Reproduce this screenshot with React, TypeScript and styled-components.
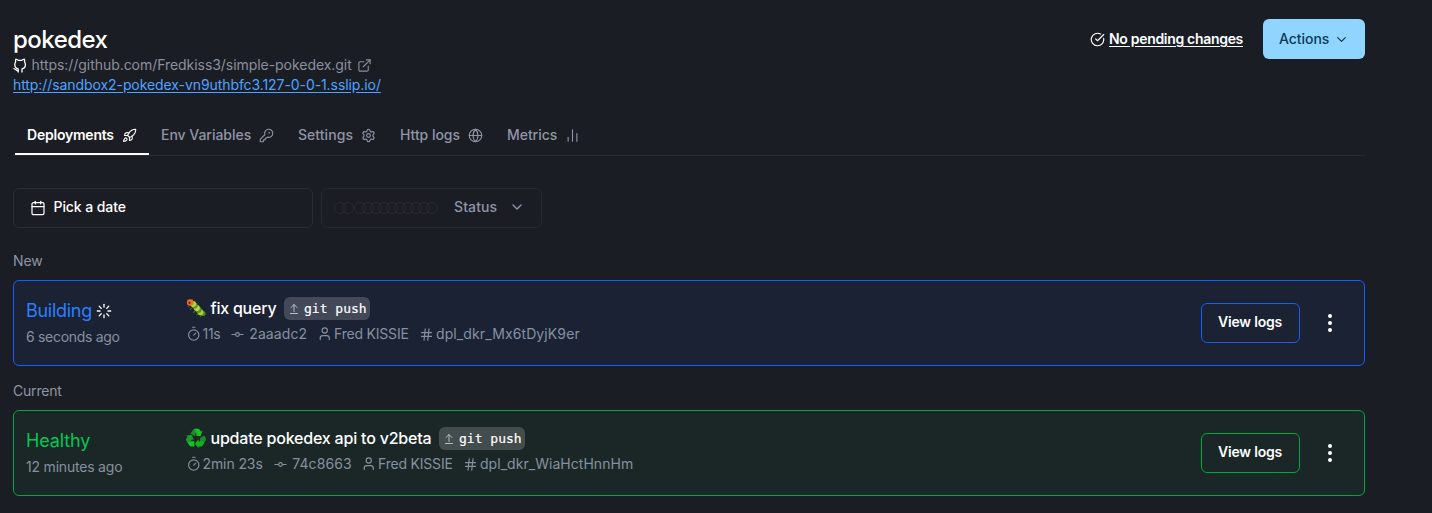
import React from "react";
import styled, { createGlobalStyle } from "styled-components";
import {
  ArrowUpFromLine,
  Calendar,
  ChartNoAxesColumn,
  ChevronDown,
  CircleCheckBig,
  EllipsisVertical,
  ExternalLink,
  GitCommitHorizontal,
  Globe,
  Hash,
  KeyRound,
  Loader,
  Rocket,
  Settings,
  Timer,
  User,
} from "lucide-react";

const Global = createGlobalStyle`
  * { box-sizing: border-box; }
  body {
    margin: 0;
    background: #1a1d24;
    color: #fff;
    font-family: Inter, "Liberation Sans", sans-serif;
    font-size: 14px;
    line-height: 20px;
    overflow: hidden;
  }
  svg { flex: none; display: block; }
`;

const Page = styled.main`
  width: 1365px;
  height: 513px;
  padding: 19px 0 0 13px;
`;

const Header = styled.header`
  display: flex;
  justify-content: space-between;
  height: 96px;
`;

/* A run of text that occupies a known width, with its tracking. */
const Text = styled.span<{ $w: number; $ls?: number }>`
  display: block;
  flex: none;
  width: ${(p) => p.$w}px;
  letter-spacing: ${(p) => p.$ls ?? 0}px;
  white-space: nowrap;
`;

const Title = styled.h1`
  margin: 0;
  padding-top: 5px;
  height: 36px;
  font-size: 24px;
  line-height: 32px;
  font-weight: 500;
  letter-spacing: -0.52px;
`;

const RepoRow = styled.div`
  display: flex;
  align-items: center;
  height: 20px;
  color: #8b8f9c;
  gap: 4.500px;
  & > svg:first-child { color: #fff; }
`;

const SiteLink = styled.a`
  display: block;
  color: #51a2ff;
  text-decoration: underline;
  text-underline-offset: 2px;
`;

const HeaderSide = styled.div`
  display: flex;
  align-items: center;
  height: 40px;
`;

const Pending = styled.div`
  display: flex;
  align-items: center;
  gap: 4px;
  margin-right: 20px;
  font-weight: 600;
  ${Text} { text-decoration: underline; text-underline-offset: 2px; }
`;

const ActionsButton = styled.button`
  display: flex;
  align-items: center;
  gap: 4px;
  width: 102px;
  height: 40px;
  padding: 0 0 0 16px;
  border: 0;
  border-radius: 6px;
  background: #90d5ff;
  color: #0b3a57;
  font: 500 14px/20px Inter, sans-serif;
  text-align: left;
`;

const Tabs = styled.nav`
  display: flex;
  height: 41px;
  padding-left: 2px;
  border-bottom: 1px solid #26292e;
`;

const Tab = styled.div<{ $active?: boolean; $w: number }>`
  display: flex;
  gap: 8px;
  width: ${(p) => p.$w}px;
  height: 40px;
  padding: 10px 0 0 12px;
  color: ${(p) => (p.$active ? "#fff" : "#9294a6")};
  font-weight: ${(p) => (p.$active ? 600 : 500)};
  border-bottom: 2px solid ${(p) => (p.$active ? "#fff" : "transparent")};
  svg { margin-top: 3px; }
`;

const Filters = styled.div`
  display: flex;
  gap: 8px;
  margin-top: 32px;
`;

const FilterBox = styled.div<{ $w: number; $dim?: boolean }>`
  display: flex;
  align-items: center;
  width: ${(p) => p.$w}px;
  height: 40px;
  padding: 0 12px 2px ${(p) => (p.$dim ? 12 : 16)}px;
  border: 1px solid ${(p) => (p.$dim ? "#25282d" : "#2b2d31")};
  border-radius: 6px;
  font-weight: 500;
  color: ${(p) => (p.$dim ? "#9294a6" : "#fff")};
`;

const DateIcon = styled(Calendar)`
  position: relative;
  top: 1px;
  margin-right: 7.500px;
`;

const Dots = styled.div`
  display: flex;
  width: 120px;
  padding-top: 2px;
`;

const Dot = styled.i<{ $gap?: boolean }>`
  width: 12px;
  height: 12px;
  border: 1px solid #2a2b2e;
  border-radius: 50%;
  margin-right: ${(p) => (p.$gap ? 0 : -4)}px;
`;

const SectionLabel = styled.div<{ $top: number }>`
  margin-top: ${(p) => p.$top}px;
  height: 29px;
  color: #8e95a3;
`;

const tones = {
  blue: { border: "#155dfc", bg: "#1a2234", text: "#2b7fff" },
  green: { border: "#00a63e", bg: "#1a2726", text: "#00c951" },
};
type Tone = keyof typeof tones;

const Card = styled.article<{ $tone: Tone }>`
  display: flex;
  height: 86px;
  border: 1px solid ${(p) => tones[p.$tone].border};
  border-radius: 6px;
  background: ${(p) => tones[p.$tone].bg};
`;

const StatusCol = styled.div`
  width: 172px;
  padding: 18px 0 0 12px;
  color: #8790a0;
`;

const StatusLine = styled.div<{ $tone: Tone }>`
  display: flex;
  align-items: center;
  gap: 4px;
  height: 24px;
  margin-bottom: 4px;
  font-size: 18px;
  line-height: 24px;
  color: ${(p) => tones[p.$tone].text};
  svg { color: #fff; }
`;

const MainCol = styled.div`
  flex: 1;
  padding-top: 16px;
`;

const CommitLine = styled.div`
  display: flex;
  align-items: center;
  height: 23px;
  font-size: 16px;
  font-weight: 500;
  & > svg { margin: 0 4.500px 1px 0; }
  & > ${Text} { padding-bottom: 1px; }
`;

const Trigger = styled.span`
  display: flex;
  align-items: center;
  gap: 4px;
  width: 86px;
  height: 23px;
  margin-left: 7.500px;
  padding-left: 4px;
  border-radius: 6px;
  background: rgba(255, 255, 255, 0.18);
  font: 500 13px/20px "DejaVu Sans Mono", monospace;
  -webkit-text-stroke: 0.2px #fff;
  svg { color: #b8bcc6; }
`;

const MetaLine = styled.div`
  display: flex;
  margin-top: 4px;
  height: 20px;
  color: #8790a0;
`;

const Meta = styled.span<{ $gap: number; $after: number }>`
  display: flex;
  align-items: center;
  gap: ${(p) => p.$gap}px;
  margin-right: ${(p) => p.$after}px;
`;

const LogsButton = styled.button<{ $tone: Tone }>`
  width: 99px;
  height: 40px;
  margin-top: 22px;
  padding: 0 0 2px 16px;
  border: 1px solid ${(p) => tones[p.$tone].border};
  border-radius: 6px;
  background: transparent;
  color: #fff;
  font: 600 14px/20px Inter, sans-serif;
  text-align: left;
`;

const Menu = styled.div`
  width: 64px;
  padding: 30px 0 0 18px;
`;

const OctocatIcon = () => (
  <svg width="14" height="15" viewBox="0 0 14 15" fill="none" stroke="currentColor" strokeWidth="1.3" strokeLinecap="round" strokeLinejoin="round">
    <path d="M5.2 14v-3.2C3 10.600 1.800 9.300 1.800 6.600c0-1.200.3-2 .9-2.700-.3-1-.2-1.900.1-2.700 1 .1 1.800.5 2.500 1.100h3.600c.7-.6 1.500-1 2.500-1.100.3.8.4 1.700.1 2.700.6.7.9 1.500.9 2.700 0 2.700-1.200 4-3.400 4.200V14" />
    <path d="M5.200 12.700c-2.200.4-2.200-1.700-4.200-2" />
  </svg>
);

const CaterpillarIcon = () => (
  <svg width="20" height="20" viewBox="0 0 20 20">
    <path d="M1.500 2 4 4M6.500.8 5.500 3.500" stroke="#6c4a22" strokeWidth="1" />
    <path d="M3 7.500 1.800 9M6 10l-2 1.500M9 13l-2 1.800M12 15.500l-1.500 2M15 17.500 14 19" stroke="#4b6b16" strokeWidth="1.100" />
    <circle cx="17" cy="15.500" r="2.600" fill="#57801a" />
    <circle cx="14.500" cy="14.300" r="3" fill="#a9cf3e" />
    <circle cx="12.500" cy="11.800" r="3.100" fill="#5f8f1c" />
    <circle cx="10.800" cy="10" r="3" fill="#b6d94b" />
    <circle cx="8.600" cy="7.500" r="3.100" fill="#5f8f1c" />
    <circle cx="7.200" cy="6" r="2.900" fill="#b3d345" />
    <circle cx="4.200" cy="4.500" r="3.300" fill="#f36b1c" />
    <circle cx="3.500" cy="4.800" r="1.100" fill="#5b1d0c" />
  </svg>
);

const RecycleIcon = () => (
  <svg width="20" height="20" viewBox="0.300 0.300 19.400 19.400">
    <path d="M4.600 5.800 6.900 2.300Q7.700 1 9.300 1L11.500 1 8.700 8Z" fill="#1f8a2c" />
    <path d="M8.300 1h3.500q1.300 0 2 1.300l.8 1.400 1.700-.8-1.900 5.400-5.400-.8 1.700-1Z" fill="#16c321" />
    <path d="M14.300 9.800 18 7.600l1.400 2.500q.6 1.300-.2 2.600L17 16.300l-4.100-.3Z" fill="#1f8a2c" />
    <path d="M17.700 15.100 16.500 17.200q-.7 1.100-2 1.100h-2v1.500L8.900 15.500l3.600-4.300v2.100h4.500Z" fill="#10b51b" />
    <path d="M8.400 13.200v5.100H5.400q-1.300 0-2-1.200L1.700 14.300l1.800-1.100Z" fill="#16c321" />
    <path d="M2.200 15.100.7 12.600q-.7-1.100 0-2.400l1-1.700L.3 7.600l5.600-.6 2 5-1.700-.9Z" fill="#1b9d28" />
  </svg>
);

type Span = [string, number, number?];

const T = ({ v }: { v: Span }) => (
  <Text $w={v[1]} $ls={v[2]}>{v[0]}</Text>
);

interface Deployment {
  tone: Tone;
  status: Span;
  age: Span;
  emoji: React.ReactNode;
  message: Span;
  duration: Span;
  commit: Span;
  id: Span;
  loading?: boolean;
}

const DeploymentCard = ({ d }: { d: Deployment }) => (
  <Card $tone={d.tone}>
    <StatusCol>
      <StatusLine $tone={d.tone}>
        <T v={d.status} />
        {d.loading && <Loader size={16} strokeWidth={2} />}
      </StatusLine>
      <T v={d.age} />
    </StatusCol>
    <MainCol>
      <CommitLine>
        {d.emoji}
        <T v={d.message} />
        <Trigger>
          <ArrowUpFromLine size={12} strokeWidth={2} />
          git push
        </Trigger>
      </CommitLine>
      <MetaLine>
        <Meta $gap={1} $after={9.5}><Timer size={15.5} strokeWidth={1.8} /><T v={d.duration} /></Meta>
        <Meta $gap={4.3} $after={9.7}><GitCommitHorizontal size={15} strokeWidth={1.8} /><T v={d.commit} /></Meta>
        <Meta $gap={1.5} $after={10}><User size={15.5} strokeWidth={1.8} /><T v={["Fred KISSIE", 75, -0.2]} /></Meta>
        <Meta $gap={2} $after={0}><Hash size={15} strokeWidth={1.8} /><T v={d.id} /></Meta>
      </MetaLine>
    </MainCol>
    <LogsButton $tone={d.tone}><T v={["View logs", 65, -0.2]} /></LogsButton>
    <Menu><EllipsisVertical size={24} strokeWidth={2} /></Menu>
  </Card>
);

const building: Deployment = {
  tone: "blue",
  status: ["Building", 66, -0.28],
  age: ["6 seconds ago", 94, -0.3],
  emoji: <CaterpillarIcon />,
  message: ["fix query", 66, -0.22],
  duration: ["11s", 18, -0.3],
  commit: ["2aaadc2", 58, 0.08],
  id: ["dpl_dkr_Mx6tDyjK9er", 144, 0.11],
  loading: true,
};

const healthy: Deployment = {
  tone: "green",
  status: ["Healthy", 64, -0.15],
  age: ["12 minutes ago", 97, -0.2],
  emoji: <RecycleIcon />,
  message: ["update pokedex api to v2beta", 221, -0.2],
  duration: ["2min 23s", 61, -0.1],
  commit: ["74c8663", 59, 0.08],
  id: ["dpl_dkr_WiaHctHnnHm", 153, 0.04],
};

export default function App() {
  return (
    <Page>
      <Global />
      <Header>
        <div>
          <Title>pokedex</Title>
          <RepoRow>
            <OctocatIcon />
            <T v={["https://github.com/Fredkiss3/simple-pokedex.git", 320.5, -0.05]} />
            <ExternalLink size={15} strokeWidth={1.8} />
          </RepoRow>
          <SiteLink><T v={["http://sandbox2-pokedex-vn9uthbfc3.127-0-0-1.sslip.io/", 368, -0.08]} /></SiteLink>
        </div>
        <HeaderSide>
          <Pending>
            <CircleCheckBig size={15} strokeWidth={1.8} />
            <T v={["No pending changes", 134, -0.31]} />
          </Pending>
          <ActionsButton><T v={["Actions", 51, -0.05]} /><ChevronDown size={15} strokeWidth={2} /></ActionsButton>
        </HeaderSide>
      </Header>
      <Tabs>
        <Tab $active $w={134}><T v={["Deployments", 87, -0.22]} /><Rocket size={15} strokeWidth={1.8} /></Tab>
        <Tab $w={137}><T v={["Env Variables", 90, -0.03]} /><KeyRound size={15} strokeWidth={1.8} /></Tab>
        <Tab $w={102}><T v={["Settings", 55, 0.05]} /><Settings size={15} strokeWidth={1.8} /></Tab>
        <Tab $w={107}><T v={["Http logs", 60, -0.05]} /><Globe size={15} strokeWidth={1.8} /></Tab>
        <Tab $w={100}><T v={["Metrics", 50, -0.05]} /><ChartNoAxesColumn size={15} strokeWidth={1.8} /></Tab>
      </Tabs>
      <Filters>
        <FilterBox $w={300}>
          <DateIcon size={16} strokeWidth={1.8} />
          <T v={["Pick a date", 73, -0.08]} />
        </FilterBox>
        <FilterBox $w={221} $dim>
          <Dots>
            {Array.from({ length: 12 }, (_, i) => <Dot key={i} $gap={i === 1} />)}
          </Dots>
          <T v={["Status", 55, 0.1]} />
          <ChevronDown size={16} strokeWidth={2} />
        </FilterBox>
      </Filters>
      <SectionLabel $top={23}><T v={["New", 29, -0.1]} /></SectionLabel>
      <DeploymentCard d={building} />
      <SectionLabel $top={15}><T v={["Current", 49, -0.2]} /></SectionLabel>
      <DeploymentCard d={healthy} />
    </Page>
  );
}
